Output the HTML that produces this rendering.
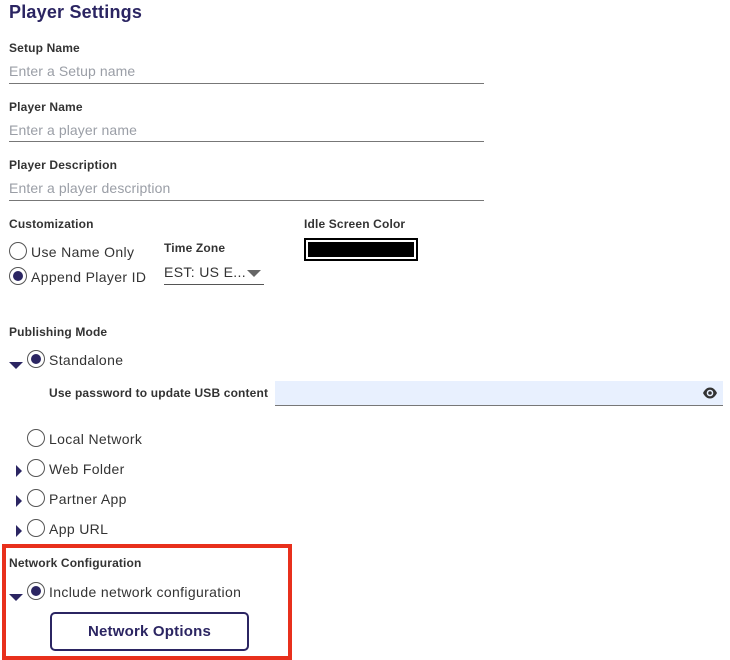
<!DOCTYPE html>
<html><head><style>
*{margin:0;padding:0;box-sizing:border-box}
body{width:730px;height:660px;background:#fff;font-family:"Liberation Sans",sans-serif;position:relative;overflow:hidden;color:#222}
.a{position:absolute;white-space:nowrap}
.t{font-size:18px;font-weight:bold;color:#2b2562;letter-spacing:0.2px}
.l{font-size:12px;font-weight:bold;color:#333;letter-spacing:0.15px}
.p{font-size:14px;color:#9a9ea6;letter-spacing:0.1px}
.ln{position:absolute;height:1px;background:#777}
.r{position:absolute;width:18px;height:18px;border:1px solid #555;border-radius:50%;background:#fff}
.r.on::after{content:"";position:absolute;left:3px;top:3px;width:10px;height:10px;border-radius:50%;background:#2b2562}
.o{font-size:14px;color:#333;letter-spacing:0.35px}
.dn{position:absolute;width:0;height:0;border-left:7px solid transparent;border-right:7px solid transparent;border-top:7px solid #2b2562}
.rt{position:absolute;width:0;height:0;border-top:6px solid transparent;border-bottom:6px solid transparent;border-left:6px solid #2b2562}
</style></head><body>
<div class="a t" style="left:9px;top:2px">Player Settings</div>

<div class="a l" style="left:9px;top:41px">Setup Name</div>
<div class="a p" style="left:9px;top:63px">Enter a Setup name</div>
<div class="ln" style="left:9px;top:83px;width:475px"></div>

<div class="a l" style="left:9px;top:100px">Player Name</div>
<div class="a p" style="left:9px;top:122px">Enter a player name</div>
<div class="ln" style="left:9px;top:141px;width:475px"></div>

<div class="a l" style="left:9px;top:158px">Player Description</div>
<div class="a p" style="left:9px;top:180px">Enter a player description</div>
<div class="ln" style="left:9px;top:200px;width:475px"></div>

<div class="a l" style="left:9px;top:217px">Customization</div>
<div class="a l" style="left:304px;top:217px">Idle Screen Color</div>
<div class="r" style="left:9px;top:242px"></div>
<div class="a o" style="left:31px;top:244px">Use Name Only</div>
<div class="r on" style="left:9px;top:267px"></div>
<div class="a o" style="left:31px;top:269px">Append Player ID</div>
<div class="a l" style="left:164px;top:241px">Time Zone</div>
<div class="a o" style="left:164px;top:264px">EST: US E...</div>
<div class="dn" style="left:247px;top:270px;border-top-color:#666"></div>
<div class="ln" style="left:164px;top:284px;width:100px;background:#555"></div>
<div class="a" style="left:304px;top:238px;width:114px;height:23px;border:2px solid #000;background:#fff;padding:2px"><div style="width:100%;height:100%;background:#000"></div></div>

<div class="a l" style="left:9px;top:325px">Publishing Mode</div>
<div class="dn" style="left:9px;top:362px"></div>
<div class="r on" style="left:27px;top:350px"></div>
<div class="a o" style="left:49px;top:352px">Standalone</div>
<div class="a l" style="left:49px;top:386px">Use password to update USB content</div>
<div class="a" style="left:275px;top:381px;width:448px;height:25px;background:#e8f0fe;border-bottom:1px solid #777"></div>
<svg class="a" style="left:702px;top:386px" width="16" height="14" viewBox="0 0 16 14"><path d="M1 7C3 3 5.5 1.5 8 1.5S13 3 15 7C13 11 10.5 12.5 8 12.5S3 11 1 7Z" fill="#333"/><circle cx="8" cy="7" r="3.3" fill="#e8f0fe"/><circle cx="8" cy="7" r="1.8" fill="#333"/></svg>

<div class="r" style="left:27px;top:429px"></div>
<div class="a o" style="left:49px;top:431px">Local Network</div>
<div class="rt" style="left:16px;top:465px"></div>
<div class="r" style="left:27px;top:459px"></div>
<div class="a o" style="left:49px;top:461px">Web Folder</div>
<div class="rt" style="left:16px;top:495px"></div>
<div class="r" style="left:27px;top:489px"></div>
<div class="a o" style="left:49px;top:491px">Partner App</div>
<div class="rt" style="left:16px;top:525px"></div>
<div class="r" style="left:27px;top:519px"></div>
<div class="a o" style="left:49px;top:521px">App URL</div>

<div class="a" style="left:2px;top:544px;width:290px;height:116px;border:4px solid #e8301c"></div>
<div class="a l" style="left:9px;top:556px">Network Configuration</div>
<div class="dn" style="left:9px;top:594px"></div>
<div class="r on" style="left:27px;top:582px"></div>
<div class="a o" style="left:49px;top:584px">Include network configuration</div>
<div class="a" style="left:50px;top:612px;width:199px;height:39px;border:2px solid #2b2562;border-radius:5px;text-align:center;line-height:35px;font-size:15px;font-weight:bold;color:#2b2562;letter-spacing:0.2px">Network Options</div>
</body></html>
